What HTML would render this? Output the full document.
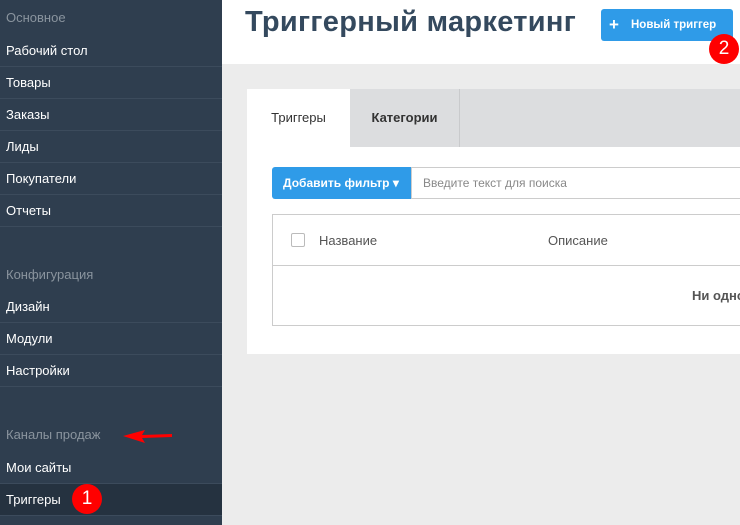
<!DOCTYPE html>
<html><head><meta charset="utf-8"><style>
*{margin:0;padding:0;box-sizing:border-box}
body{width:740px;height:525px;overflow:hidden;background:#ececec;font-family:"Liberation Sans",sans-serif;position:relative}
.sb{position:absolute;left:0;top:0;width:222px;height:525px;background:#2f3e4f}
.sec{position:absolute;left:6px;color:#8a949e;font-size:13px}
.it{position:absolute;left:0;width:222px;height:32px;line-height:31px;padding-left:6px;color:#fff;font-size:13px;border-bottom:1px solid #3c4b5c}
.hdr{position:absolute;left:222px;top:0;right:0;height:64px;background:#fff}
h1{position:absolute;left:245px;top:6px;font-size:29px;color:#34495e;font-weight:bold;letter-spacing:0.3px}
.nb{position:absolute;left:601px;top:9px;width:132px;height:32px;background:#2f9be8;border-radius:3px;color:#fff;font-size:11.5px;font-weight:bold;line-height:32px;padding-left:30px}
.nb b{position:absolute;left:8px;top:0;font-size:17px}
.badge{position:absolute;width:30px;height:30px;border-radius:50%;background:#f00;color:#fff;font-size:19px;text-align:center;line-height:30px}
.panel{position:absolute;left:247px;top:89px;width:500px;height:265px;background:#fff}
.tabs{position:absolute;left:0;top:0;width:500px;height:58px;background:#dcdddf}
.t1{position:absolute;left:0;top:0;width:103px;height:58px;background:#fff;font-size:13px;color:#333;line-height:58px;text-align:center}
.t2{position:absolute;left:103px;top:0;width:110px;height:58px;border-right:1px solid #c9cacc;font-size:13px;font-weight:bold;color:#333;line-height:58px;text-align:center}
.fb{position:absolute;left:25px;top:78px;width:139px;height:32px;background:#2f9be8;border-radius:3px 0 0 3px;color:#fff;font-size:12px;font-weight:bold;line-height:32px;padding-left:11px}
.inp{position:absolute;left:164px;top:78px;width:340px;height:32px;border:1px solid #ccc;font-size:12px;color:#888;line-height:30px;padding-left:11px}
.tbl{position:absolute;left:25px;top:125px;width:480px;height:112px;border:1px solid #ccc}
.th{position:absolute;left:0;top:0;width:100%;height:51px;border-bottom:1px solid #ccc;font-size:13px;color:#555}
</style></head><body>
<div class="sb">
<div class="sec" style="top:10px">Основное</div>
<div class="it" style="top:35px">Рабочий стол</div>
<div class="it" style="top:67px">Товары</div>
<div class="it" style="top:99px">Заказы</div>
<div class="it" style="top:131px">Лиды</div>
<div class="it" style="top:163px">Покупатели</div>
<div class="it" style="top:195px">Отчеты</div>
<div class="sec" style="top:267px">Конфигурация</div>
<div class="it" style="top:291px">Дизайн</div>
<div class="it" style="top:323px">Модули</div>
<div class="it" style="top:355px">Настройки</div>
<div class="sec" style="top:427px">Каналы продаж</div>
<div class="it" style="top:452px">Мои сайты</div>
<div class="it" style="top:484px;background:#253240">Триггеры</div>
</div>
<svg style="position:absolute;left:120px;top:426px" width="55" height="20"><path d="M3 10 L25 4 L22 9 L52 8 L52 11 L22 12 L25 17 Z" fill="#f00"/></svg>
<div class="badge" style="left:72px;top:484px">1</div>
<div class="hdr"></div>
<h1>Триггерный маркетинг</h1>
<div class="nb"><b>+</b>Новый триггер</div>
<div class="badge" style="left:709px;top:34px">2</div>
<div class="panel">
<div class="tabs"><div class="t1">Триггеры</div><div class="t2">Категории</div></div>
<div class="fb">Добавить фильтр ▾</div>
<div class="inp">Введите текст для поиска</div>
<div class="tbl"><div class="th">
<div style="position:absolute;left:18px;top:18px;width:14px;height:14px;border:1px solid #bbb;border-radius:2px"></div>
<div style="position:absolute;left:46px;top:18px">Название</div>
<div style="position:absolute;left:275px;top:18px">Описание</div>
</div>
<div style="position:absolute;left:419px;top:73px;font-size:13px;font-weight:bold;color:#555;white-space:nowrap">Ни одного</div>
</div>
</div>
</body></html>
